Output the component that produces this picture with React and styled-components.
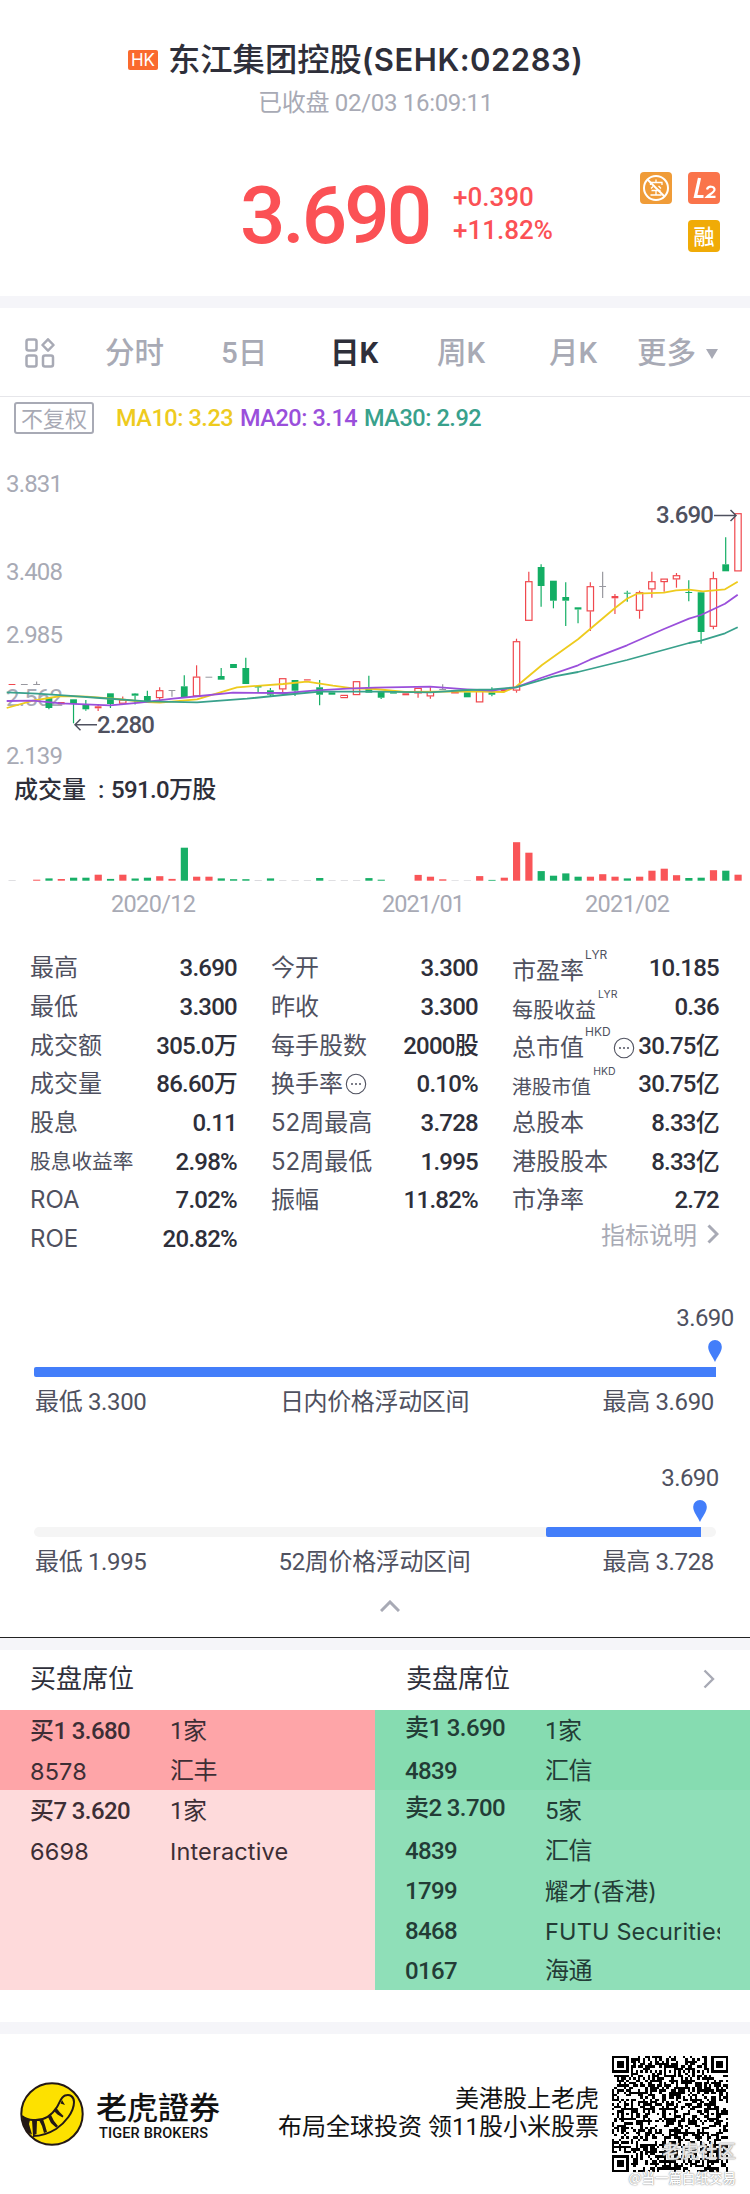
import React from 'react';
import styled, { createGlobalStyle } from 'styled-components';

const Colors = {
  up: '#fb5155',
  down: '#13ae64',
  text: '#2e2f3a',
  label: '#4f515f',
  muted: '#a8aab5',
  band: '#f5f5f9',
  blue: '#437efa',
  ma10: '#eecb1e',
  ma20: '#9a4fdb',
  ma30: '#39a18c',
};

const GlobalStyle = createGlobalStyle`
  * {
    box-sizing: border-box;
  }

  body {
    margin: 0;
    background: #fff;
    color: ${Colors.text};
    font-family: Roboto, 'Noto Sans CJK SC', sans-serif;
  }
`;

const Page = styled.main`
  width: 750px;
  height: 2194px;
  overflow: hidden;
  display: flex;
  flex-direction: column;
  background: #fff;
`;

const Band = styled.div`
  height: ${props => props.$height}px;
  margin-top: ${props => props.$gap || 0}px;
  flex: none;
  background: ${Colors.band};
  border-top: ${props => (props.$ruled ? '1px solid #222' : 'none')};
`;

/* ---------- header ---------- */

const Header = styled.header`
  height: 296px;
  flex: none;
`;

const TitleRow = styled.div`
  display: flex;
  align-items: center;
  height: 48px;
  margin-top: 36px;
  padding-left: 128px;
`;

const Market = styled.span`
  width: 30px;
  height: 20px;
  margin-right: 10px;
  border-radius: 2px;
  background: #fa6a2e;
  color: #fff;
  font: 17px/21px Inter, sans-serif;
  text-align: center;
`;

const Name = styled.h1`
  margin: 0;
  font: 500 32.3px/48px Inter, 'Noto Sans CJK SC', sans-serif;
  white-space: nowrap;

  span {
    font-size: 31px;
    font-weight: 600;
    letter-spacing: 0.5px;
  }
`;

const Status = styled.div`
  margin-top: 1px;
  padding-left: 258px;
  color: ${Colors.muted};
  font-size: 24px;
  line-height: 36px;
  letter-spacing: -0.3px;
  white-space: nowrap;
`;

const QuoteRow = styled.div`
  display: flex;
  margin-top: 51px;
  padding-left: 240px;
  height: 90px;
  color: ${Colors.up};
`;

const Price = styled.div`
  width: 213px;
  font-size: 80px;
  font-weight: 500;
  line-height: 88px;
  letter-spacing: -3px;
`;

const Change = styled.div`
  width: 187px;
  padding-top: 9px;
  font-size: 26px;
  font-weight: 500;
  line-height: 33px;
  letter-spacing: 0;
`;

const Tags = styled.div`
  display: grid;
  grid-template-columns: 32px 32px;
  gap: 16px;
  align-content: start;

  > :last-child {
    grid-column: 2;
  }
`;

const Tag = styled.span`
  width: 32px;
  height: 32px;
  border-radius: 4px;
  background: ${props => props.$color};
  color: #fff;
  font: 500 21px/31px 'Noto Sans CJK SC', sans-serif;
  text-align: center;

  svg {
    display: block;
  }
`;

/* ---------- chart ---------- */

const Tabs = styled.nav`
  display: flex;
  height: 89px;
  flex: none;
  padding: 2px 25px 0;
  border-bottom: 1px solid #e6e6ea;
  align-items: center;
`;

const Tab = styled.span`
  display: flex;
  align-items: center;
  flex: none;
  width: ${props => props.$width}px;
  color: ${props => (props.$active ? Colors.text : Colors.muted)};
  font: ${props => (props.$active ? 700 : 500)} 29.5px/42px Roboto, 'Noto Sans CJK SC', sans-serif;
`;

const Triangle = styled.i`
  margin: 2px 0 0 10px;
  border: 6px solid transparent;
  border-top: 10px solid ${Colors.muted};
  border-bottom: 0;
`;

const Legend = styled.div`
  display: flex;
  align-items: center;
  height: 43px;
  flex: none;
  padding: 0 0 1px 14px;
  font-size: 23.5px;
  font-weight: 500;
  white-space: nowrap;
`;

const Adjust = styled.span`
  width: 80px;
  height: 32px;
  margin-right: 22px;
  border: 2px solid ${Colors.muted};
  border-radius: 3px;
  color: ${Colors.muted};
  font: 22px/26px 'Noto Sans CJK SC', sans-serif;
  text-align: center;
`;

const Average = styled.span`
  width: 124px;
  color: ${props => props.$color};
  letter-spacing: -0.45px;
`;

const ChartSvg = styled.svg`
  display: block;
  flex: none;
  font-family: Roboto, 'Noto Sans CJK SC', sans-serif;
`;

// [kind, high, open/close top, open/close bottom, low]
// r = rising, rd = rising with almost no body, g = falling, n = unchanged
const candles = [
  ['rd', 244, 244, 245, 245], ['n', 244, 244, 245, 245], ['n', 241.5, 244, 245, 245],
  ['g', 257.6, 257.6, 268, 269.3], ['rd', 262, 262, 264.3, 264.3], ['g', 259.3, 259.3, 264, 283.3],
  ['g', 260, 264.5, 269.3, 270.7], ['rd', 264, 266.3, 268.3, 271], ['g', 253.3, 253.3, 264, 268],
  ['r', 256.6, 259.6, 263.6, 263.6], ['g', 253, 253.5, 255.7, 264.5], ['g', 250.7, 256, 262, 262],
  ['r', 247.3, 250.3, 258, 261], ['n', 250, 250, 251, 256.7], ['g', 235.3, 246.3, 257.7, 257.7],
  ['r', 225.3, 236.7, 256.3, 256.3], ['n', 236.7, 236.7, 237.7, 237.7], ['g', 228, 236, 239.7, 239.7],
  ['g', 224, 224, 228, 228], ['g', 217.7, 228, 244, 244], ['g', 246, 246, 247.5, 252],
  ['g', 248, 250.3, 254.7, 257], ['r', 238.3, 238.3, 249.3, 253], ['g', 240, 240, 250.7, 256],
  ['rd', 239.3, 239.3, 240.5, 240.5], ['g', 240, 247.3, 254.7, 265.3], ['g', 252.3, 252.3, 254.7, 254.7],
  ['r', 255, 255, 258, 258], ['r', 241.3, 241.3, 255, 255], ['g', 235.7, 247.3, 252.7, 252.7],
  ['g', 252, 252, 257.7, 259], ['g', 252.3, 252.3, 253.6, 253.6], ['rd', 253.3, 253.3, 255.3, 255.3],
  ['r', 248, 248, 253.3, 257.7], ['r', 247.3, 252, 256.3, 258.7], ['n', 244.3, 249, 250, 250],
  ['r', 251.3, 251.3, 253.3, 253.3], ['g', 252.3, 252.3, 257.3, 257.3], ['r', 250.7, 250.7, 262.3, 262.3],
  ['g', 247.3, 252.3, 254.7, 256.3], ['rd', 249.3, 249.3, 251, 252.3], ['r', 198.7, 201.3, 250.5, 252.7],
  ['r', 131.7, 141.3, 180.7, 180.7], ['g', 124.3, 127, 146, 166.7], ['g', 140.7, 140.7, 160.7, 168.3],
  ['g', 142.3, 157, 160.7, 186], ['g', 167.3, 167.3, 169.5, 183.3], ['r', 142.3, 146.3, 171.3, 191],
  ['n', 131.7, 146, 147, 158], ['rd', 154, 156, 158.3, 174], ['g', 150.7, 152.7, 153.7, 161.7],
  ['r', 150.7, 152.3, 170.7, 178.7], ['r', 131.7, 141.3, 149.3, 157.7], ['r', 138.7, 138.7, 142, 151.7],
  ['r', 133, 135.3, 139.3, 147.7], ['g', 140.3, 152, 153, 161.3], ['g', 152.3, 152.3, 192, 203.7],
  ['r', 131.7, 138.3, 186.7, 189.3], ['g', 97.3, 124.3, 131.3, 131.3], ['r', 73.3, 73.3, 131.3, 131.3],
];

const ma10 = '6.7,268 33,260.7 61,256 87,256.7 117,259 147,262 160,262.7 197,259.3 217,253.3 237,247.3 283,244 307,241.7 333,245.7 353,248.3 375,249 405,252 441,251.7 482,251.7 504,252 516,246.7 542,225 578,199.3 615,168 627,158.7 637,153.7 664,152.7 676,150.3 689,149.7 703,151.3 725,149.3 737.7,141.7';
const ma20 = '6.7,261 33,260.7 61,263.3 110,265.3 140,262.7 173,258.7 200,256 233,252.7 287,253 313,250.7 347,248.7 375,247.7 430,246.7 467,249.3 492,250.7 516,247.3 541,238 578,225.3 590,219.7 627,205.3 664,189 689,178.7 701,175 725,163.7 737.7,154.7';
const ma30 = '6.7,252.3 37,253.7 67,255.7 100,258 147,261.3 197,262.3 247,258.7 283,255 320,251.7 375,251.7 430,252.3 467,250 492,249.3 516,247.3 553,236.7 578,232 627,220 689,203 701,200.7 725,193.3 737.7,187.3';

const scale = [
  ['3.831', 52],
  ['3.408', 139.7],
  ['2.985', 202.7],
  ['2.562', 266],
  ['2.139', 324.3],
];

const step = 12.305;

const Candle = ({ x, kind, high, top, bottom, low }) => {
  const color = { r: '#f0484e', rd: '#f0484e', g: Colors.down, n: '#98989f' }[kind];
  const hollow = kind === 'r';
  return (
    <g stroke={color} fill={color} strokeWidth="1.2">
      {high < top && <path d={`M${x} ${high}V${top}`} />}
      {low > bottom && <path d={`M${x} ${bottom}V${low}`} />}
      {hollow ? (
        <rect x={x - 3.2} y={top + 0.4} width="6.4" height={bottom - top - 0.8} fill="none" />
      ) : (
        <rect x={x - 3.4} y={top} width="6.8" height={bottom - top} stroke="none" />
      )}
    </g>
  );
};

const PriceChart = () => (
  <ChartSvg width="750" height="330" viewBox="0 0 750 330">
    <g fill={Colors.muted} fontSize="24">
      {scale.map(([value, y]) => (
        <text key={value} x="6" y={y} textLength="57">
          {value}
        </text>
      ))}
    </g>
    {candles.map(([kind, high, top, bottom, low], i) => (
      <Candle key={i} x={12 + i * step} {...{ kind, high, top, bottom, low }} />
    ))}
    <g fill="none" strokeWidth="1.8" strokeLinejoin="round">
      <polyline points={ma10} stroke={Colors.ma10} />
      <polyline points={ma20} stroke={Colors.ma20} />
      <polyline points={ma30} stroke={Colors.ma30} />
    </g>
    <g fill={Colors.label} fontSize="24" fontWeight="500">
      <text x="97" y="293" textLength="58">2.280</text>
      <text x="656" y="83.3" textLength="58">3.690</text>
    </g>
    <g fill="none" stroke={Colors.label} strokeWidth="1.5">
      <path d="M97 284.7H75M80.5 279.2 75 284.7l5.5 5.5" />
      <path d="M714 75.5h22M730.5 70l5.5 5.5-5.5 5.5" />
    </g>
  </ChartSvg>
);

// [direction, height], missing bars are sessions without trades
const volumes = [
  ['n', 0.6], null, ['r', 1], ['g', 2.3], ['r', 1.7], ['g', 3], ['g', 3], ['r', 6], ['g', 1.8], ['r', 6],
  ['g', 2.2], ['g', 3], ['r', 4.5], ['r', 1.8], ['g', 33], ['r', 4], ['r', 4], ['g', 2.3], ['g', 1.5],
  ['g', 1.5], ['n', 0.7], ['g', 2.3], ['n', 0.6], ['n', 0.6], ['n', 0.6], ['g', 2.7], ['n', 0.6],
  ['n', 0.6], ['n', 0.6], ['g', 2.6], ['g', 1], null, null, ['r', 5.8], ['r', 4], ['r', 1.4],
  ['n', 0.5], ['n', 0.5], ['r', 4.6], ['g', 0.8], ['r', 3], ['r', 38.5], ['r', 28], ['g', 9.6],
  ['g', 5], ['g', 7.3], ['g', 4], ['r', 4], ['r', 6.5], ['r', 4], ['g', 2.3], ['r', 4], ['r', 10],
  ['r', 12], ['r', 5.5], ['g', 2.7], ['g', 3], ['r', 10.5], ['g', 10], ['r', 6],
];

const VolumeHeading = styled.div`
  height: 40px;
  flex: none;
  display: flex;
  align-items: center;
  padding: 0 0 6px 14px;
  font-size: 24px;
  font-weight: 500;
  white-space: pre;

  span {
    width: 97px;
  }

  b {
    font-weight: 500;
    letter-spacing: -0.65px;
  }
`;

const VolumeChart = () => (
  <ChartSvg width="750" height="120" viewBox="0 810 750 120">
    {volumes.map(
      (bar, i) =>
        bar && (
          <rect
            key={i}
            x={8.5 + i * step}
            y={880.7 - bar[1]}
            width="7.2"
            height={bar[1]}
            fill={{ r: '#f95558', g: '#18af67', n: '#c9c9cf' }[bar[0]]}
          />
        )
    )}
    <g fill={Colors.muted} fontSize="23.5">
      <text x="111" y="912" textLength="85">2020/12</text>
      <text x="382" y="912" textLength="83">2021/01</text>
      <text x="585" y="912" textLength="85">2021/02</text>
    </g>
  </ChartSvg>
);

/* ---------- key figures ---------- */

const Stats = styled.section`
  display: grid;
  grid-template-columns: 207px 207px 207px;
  column-gap: 34px;
  height: 370px;
  flex: none;
  padding: 19px 0 0 30px;
`;

const StatRow = styled.div`
  display: flex;
  justify-content: space-between;
  align-items: center;
  height: 38.7px;
  white-space: nowrap;
`;

const StatLabel = styled.span`
  display: flex;
  align-items: center;
  color: ${Colors.label};
  font: ${props => props.$size || 24}px/36px Inter, 'Noto Sans CJK SC', sans-serif;
  padding-top: ${props => (props.$note ? 5 : 0)}px;

  sup {
    align-self: flex-start;
    margin: ${props => (props.$size ? '-5px 0 0 2px' : '-6px 0 0 1px')};
    font: ${props => (props.$size ? 10.5 : 12)}px/16px Inter, sans-serif;
  }

  svg {
    margin: 0 0 0 2px;
  }
`;

const StatValue = styled.span`
  font-size: 24px;
  font-weight: 500;
  line-height: 36px;
  letter-spacing: -0.75px;
`;

const Explain = styled.div`
  display: flex;
  align-items: center;
  justify-content: flex-end;
  height: 28px;
  color: ${Colors.muted};
  font-size: 24px;

  svg {
    margin-left: 10px;
  }
`;

const Dots = () => (
  <svg width="22" height="22" viewBox="0 0 22 22" fill={Colors.label}>
    <circle cx="11" cy="11" r="9.7" fill="none" stroke={Colors.label} strokeWidth="1.1" />
    <circle cx="7" cy="11" r="1" />
    <circle cx="11" cy="11" r="1" />
    <circle cx="15" cy="11" r="1" />
  </svg>
);

const Chevron = ({ weight = 3 }) => (
  <svg width="12" height="20" viewBox="0 0 12 20" fill="none" stroke={Colors.muted} strokeWidth={weight}>
    <path d="M1.5 1.5 10 10l-8.5 8.5" />
  </svg>
);

const stats = [
  [
    { label: '最高', value: '3.690' },
    { label: '最低', value: '3.300' },
    { label: '成交额', value: '305.0万' },
    { label: '成交量', value: '86.60万' },
    { label: '股息', value: '0.11' },
    { label: '股息收益率', value: '2.98%', size: 20.7 },
    { label: 'ROA', value: '7.02%' },
    { label: 'ROE', value: '20.82%' },
  ],
  [
    { label: '今开', value: '3.300' },
    { label: '昨收', value: '3.300' },
    { label: '每手股数', value: '2000股' },
    { label: '换手率', value: '0.10%', info: true },
    { label: '52周最高', value: '3.728' },
    { label: '52周最低', value: '1.995' },
    { label: '振幅', value: '11.82%' },
  ],
  [
    { label: '市盈率', value: '10.185', note: 'LYR' },
    { label: '每股收益', value: '0.36', note: 'LYR', size: 21 },
    { label: '总市值', value: '30.75亿', note: 'HKD', info: true },
    { label: '港股市值', value: '30.75亿', note: 'HKD', size: 19.8 },
    { label: '总股本', value: '8.33亿' },
    { label: '港股股本', value: '8.33亿' },
    { label: '市净率', value: '2.72' },
  ],
];

/* ---------- price ranges ---------- */

const Range = styled.section`
  height: 160px;
  flex: none;
  padding: 0 34px;
`;

const RangeMarker = styled.div`
  display: flex;
  flex-direction: column;
  align-items: center;
  width: 60px;
  height: 67px;
  margin-left: ${props => props.$at - 41}px;
  color: ${Colors.label};
  font-size: 24px;
  line-height: 36px;
  letter-spacing: -0.6px;

  svg {
    margin: 4px 0 0 20px;
  }
`;

const Track = styled.div`
  display: flex;
  height: 10px;
  border-radius: 5px;
  background: #f5f5f5;
`;

const Fill = styled.div`
  margin-left: ${props => props.$from}px;
  width: ${props => props.$to - props.$from}px;
  border-radius: 2px 0 0 2px;
  background: ${Colors.blue};
`;

const RangeLabels = styled.div`
  display: grid;
  grid-template-columns: 1fr auto 1fr;
  margin-top: 6px;
  padding: 0 2px 0 1px;
  color: ${Colors.label};
  font-size: 24px;
  line-height: 38px;
  letter-spacing: -0.35px;

  > :last-child {
    text-align: right;
  }
`;

const PriceRange = ({ title, low, high, from, to }) => (
  <Range>
    <RangeMarker $at={to}>
      3.690
      <svg width="14" height="22" viewBox="0 0 14 22" fill={Colors.blue}>
        <path d="M7 0a6.8 6.8 0 0 1 6.8 7C13.8 12 9 17 7 22 5 17 .2 12 .2 7A6.8 6.8 0 0 1 7 0Z" />
      </svg>
    </RangeMarker>
    <Track>
      <Fill $from={from} $to={to} />
    </Track>
    <RangeLabels>
      <span>最低 {low}</span>
      <span>{title}</span>
      <span>最高 {high}</span>
    </RangeLabels>
  </Range>
);

const Collapse = styled.div`
  height: 37px;
  flex: none;
  margin-top: -20px;
  padding-left: 380px;
  line-height: 0;
`;

/* ---------- broker queue ---------- */

const QueueHeading = styled.div`
  display: grid;
  grid-template-columns: 376px 297px auto;
  align-items: center;
  height: 60px;
  flex: none;
  padding: 0 0 3px 30px;
  font-size: 26px;
  line-height: 36px;
`;

const Queue = styled.section`
  display: flex;
  height: 280px;
  flex: none;
`;

const Side = styled.div`
  width: 375px;
  display: flex;
  flex-direction: column;
  background: ${props => props.$color};
  color: ${props => props.$ink};
`;

const Level = styled.div`
  background: ${props => props.$color};
`;

const Broker = styled.div`
  display: grid;
  grid-template-columns: 140px 175px;
  height: 40px;
  padding-left: 30px;
  font-size: 24px;
  line-height: 40px;
  white-space: nowrap;
`;

const Cell = styled.span`
  overflow: hidden;
  font-family: ${props => (props.$wide ? 'Inter' : 'Roboto')}, 'Noto Sans CJK SC', sans-serif;
  font-size: ${props => (props.$wide ? 23.5 : 24)}px;
  font-weight: ${props => (props.$strong ? 500 : 400)};
  letter-spacing: ${props => (props.$wide ? 0.15 : -0.6)}px;
  line-height: ${props => (props.$raised ? 37 : 43)}px;
`;

/* ---------- footer ---------- */

const Footer = styled.footer`
  display: flex;
  flex: 1;
  padding: 22px 22px 0 20px;
  color: #111;

  > :first-child {
    flex: none;
    margin-top: 26px;
  }
`;

const Brand = styled.div`
  display: flex;
  flex-direction: column;
  width: 136px;
  padding: 32px 0 0 12px;
  font: 500 31px/36px 'Noto Sans CJK TC', sans-serif;
  white-space: nowrap;

  small {
    padding-left: 3px;
    font: 500 14.5px/20px Roboto, sans-serif;
    letter-spacing: 0.15px;
  }
`;

const Slogan = styled.p`
  flex: 1;
  margin: 29px 13px 0 0;
  color: #111;
  font-size: 24px;
  line-height: 28px;
  text-align: right;
`;

const Code = styled.div`
  position: relative;
  width: 116px;
  height: 116px;
`;

const Watermark = styled.span`
  position: absolute;
  right: -8px;
  top: ${props => props.$top}px;
  color: ${props => props.$color};
  font: 500 ${props => props.$size}px/20px 'Noto Sans CJK SC', sans-serif;
  text-shadow: 0 0 1px #888, 0 0 2px #aaa;
  white-space: nowrap;
`;

const size = 49;
const anchors = [6, 24, 42];

const isDark = (x, y) => {
  const corners = [[3, 3], [size - 4, 3], [3, size - 4]];
  for (const [cx, cy] of corners) {
    const d = Math.max(Math.abs(x - cx), Math.abs(y - cy));
    if (d <= 4) return d !== 2 && d !== 4;
  }
  for (const cx of anchors) {
    for (const cy of anchors) {
      const d = Math.max(Math.abs(x - cx), Math.abs(y - cy));
      const corner = corners.some(([a, b]) => Math.abs(a - cx) < 5 && Math.abs(b - cy) < 5);
      if (d <= 2 && !corner) return d !== 1;
    }
  }
  if (x === 6 || y === 6) return (x + y) % 2 === 0;
  const n = Math.sin(x * 127.1 + y * 311.7) * 43758.5453;
  return n - Math.floor(n) > 0.49;
};

const modules = [];
for (let y = 0; y < size; y += 1) {
  for (let x = 0; x < size; x += 1) {
    if (isDark(x, y)) modules.push(`M${x} ${y}h1v1h-1z`);
  }
}

const QrCode = () => (
  <svg width="116" height="116" viewBox="0 0 49 49" shapeRendering="crispEdges">
    <path d={modules.join('')} fill="#000" />
  </svg>
);

const TigerLogo = () => (
  <svg width="64" height="64" viewBox="0 0 64 64">
    <circle cx="32" cy="32" r="30.7" fill="#fde100" stroke="#231815" strokeWidth="2" />
    <path
      d="M2 34c4 3 7 4 11 4 11 1 19-5 24-13 3-5 4-10 8-11.500 5-2 9 1.500 9 6.500 0 10-9 21-18 27-8 5-15 7-23 7"
      fill="none"
      stroke="#231815"
      strokeWidth="2"
    />
    <path
      d="M2 34l8 4-1 4 3 10.500-4-2C4 45 2 40 2 34zM12 38l5 .5-.5 13.500-3.500 1.500zM19 38l4-1 2 6 2 7-3 1-2-7zM28 35l3-2 3 6 4 5-2 1.500-5-4.500zM34 29l2.500-3 3 4 4 4-1 1.500-5-3zM42 18l3 5-1.500-.5-3-1z"
      fill="#231815"
    />
  </svg>
);

const App = () => (
  <>
    <GlobalStyle />
    <Page>
      <Header>
        <TitleRow>
          <Market>HK</Market>
          <Name>
            东江集团控股<span>(SEHK:02283)</span>
          </Name>
        </TitleRow>
        <Status>已收盘 02/03 16:09:11</Status>
        <QuoteRow>
          <Price>3.690</Price>
          <Change>
            <div>+0.390</div>
            <div>+11.82%</div>
          </Change>
          <Tags>
            <Tag $color="#f09c38">
              <svg width="32" height="32" viewBox="0 0 32 32" fill="none" stroke="#fff">
                <circle cx="16" cy="16" r="12" strokeWidth="2" />
                <path
                  d="M16 7.5v2.500M10.500 13v-2.500h11.500V13M13 14.500l-2 2M18.500 14l2.500 2.500M11.500 18.500h9M16 18.500V23M10.500 23h11"
                  strokeWidth="1.3"
                />
                <path d="M7.500 7.500 24.500 24.500" strokeWidth="2" />
              </svg>
            </Tag>
            <Tag $color="#fa744b">
              <svg width="32" height="32" viewBox="0 0 32 32" fill="none" stroke="#fff">
                <path d="M11.500 6 7.500 24.500h8" strokeWidth="3.2" />
                <path d="M19 17.500c1-4 8-3.500 7.500.3-.3 2.500-5 4.500-7.500 7h8.500" strokeWidth="2.2" />
              </svg>
            </Tag>
            <Tag $color="#f0ab07">融</Tag>
          </Tags>
        </QuoteRow>
      </Header>
      <Band $height={12} />
      <Tabs>
        <Tab $width={80}>
          <svg width="30" height="30" viewBox="0 0 30 30" fill="none" stroke={Colors.muted} strokeWidth="2.5">
            <rect x="1.5" y="1.5" width="10" height="11" rx="2" />
            <path d="M23 1.3 28.500 7 23 12.700 17.500 7Z" strokeLinejoin="round" />
            <rect x="1.5" y="17.5" width="10" height="11" rx="2" />
            <rect x="18" y="17.5" width="10" height="11" rx="2" />
          </svg>
        </Tab>
        <Tab $width={116}>分时</Tab>
        <Tab $width={109}>5日</Tab>
        <Tab $width={107} $active>日K</Tab>
        <Tab $width={112}>周K</Tab>
        <Tab $width={88}>月K</Tab>
        <Tab $width={90}>
          更多
          <Triangle />
        </Tab>
      </Tabs>
      <Legend>
        <Adjust>不复权</Adjust>
        <Average $color={Colors.ma10}>MA10: 3.23</Average>
        <Average $color={Colors.ma20}>MA20: 3.14</Average>
        <Average $color={Colors.ma30}>MA30: 2.92</Average>
      </Legend>
      <PriceChart />
      <VolumeHeading>
        <span>成交量  :</span>
        <b>591.0万股</b>
      </VolumeHeading>
      <VolumeChart />
      <Stats>
        {stats.map((column, i) => (
          <div key={i}>
            {column.map(({ label, value, note, info, size: fontSize }) => (
              <StatRow key={label}>
                <StatLabel $size={fontSize} $note={note}>
                  {label}
                  {note && <sup>{note}</sup>}
                  {info && <Dots />}
                </StatLabel>
                <StatValue>{value}</StatValue>
              </StatRow>
            ))}
            {i === 2 && (
              <Explain>
                指标说明
                <Chevron />
              </Explain>
            )}
          </div>
        ))}
      </Stats>
      <PriceRange title="日内价格浮动区间" low="3.300" high="3.690" from={0} to={682} />
      <PriceRange title="52周价格浮动区间" low="1.995" high="3.728" from={512} to={667} />
      <Collapse>
        <svg width="20" height="12" viewBox="0 0 20 12" fill="none" stroke={Colors.muted} strokeWidth="3">
          <path d="M1 11 10 2l9 9" />
        </svg>
      </Collapse>
      <Band $height={13} $ruled />
      <QueueHeading>
        <span>买盘席位</span>
        <span>卖盘席位</span>
        <Chevron weight={2.4} />
      </QueueHeading>
      <Queue>
        <Side $color="#fedadb" $ink="#3d2e35">
          <Level $color="#fea5a8">
            <Broker>
              <Cell $strong>买1 3.680</Cell>
              <Cell>1家</Cell>
            </Broker>
            <Broker>
              <Cell $wide>8578</Cell>
              <Cell>汇丰</Cell>
            </Broker>
          </Level>
          <Broker>
            <Cell $strong>买7 3.620</Cell>
            <Cell>1家</Cell>
          </Broker>
          <Broker>
            <Cell $wide>6698</Cell>
            <Cell $wide>Interactive</Cell>
          </Broker>
        </Side>
        <Side $color="#8fdfb8" $ink="#233c36">
          <Level $color="#86dcb1">
            <Broker>
              <Cell $strong $raised>卖1 3.690</Cell>
              <Cell>1家</Cell>
            </Broker>
            <Broker>
              <Cell $strong>4839</Cell>
              <Cell>汇信</Cell>
            </Broker>
          </Level>
          <Broker>
            <Cell $strong $raised>卖2 3.700</Cell>
            <Cell>5家</Cell>
          </Broker>
          <Broker>
            <Cell $strong>4839</Cell>
            <Cell>汇信</Cell>
          </Broker>
          <Broker>
            <Cell $strong>1799</Cell>
            <Cell $wide>耀才(香港)</Cell>
          </Broker>
          <Broker>
            <Cell $strong>8468</Cell>
            <Cell $wide>FUTU Securities</Cell>
          </Broker>
          <Broker>
            <Cell $strong>0167</Cell>
            <Cell>海通</Cell>
          </Broker>
        </Side>
      </Queue>
      <Band $height={12} $gap={32} />
      <Footer>
        <TigerLogo />
        <Brand>
          老虎證券
          <small>TIGER BROKERS</small>
        </Brand>
        <Slogan>
          美港股上老虎
          <br />
          布局全球投资 领11股小米股票
        </Slogan>
        <Code>
          <QrCode />
          <Watermark $top={84} $size={18.5} $color="rgba(235, 235, 235, 0.95)">老虎社区</Watermark>
          <Watermark $top={111} $size={13.5} $color="#fff">@当一篇白纸交易</Watermark>
        </Code>
      </Footer>
    </Page>
  </>
);

export default App;
